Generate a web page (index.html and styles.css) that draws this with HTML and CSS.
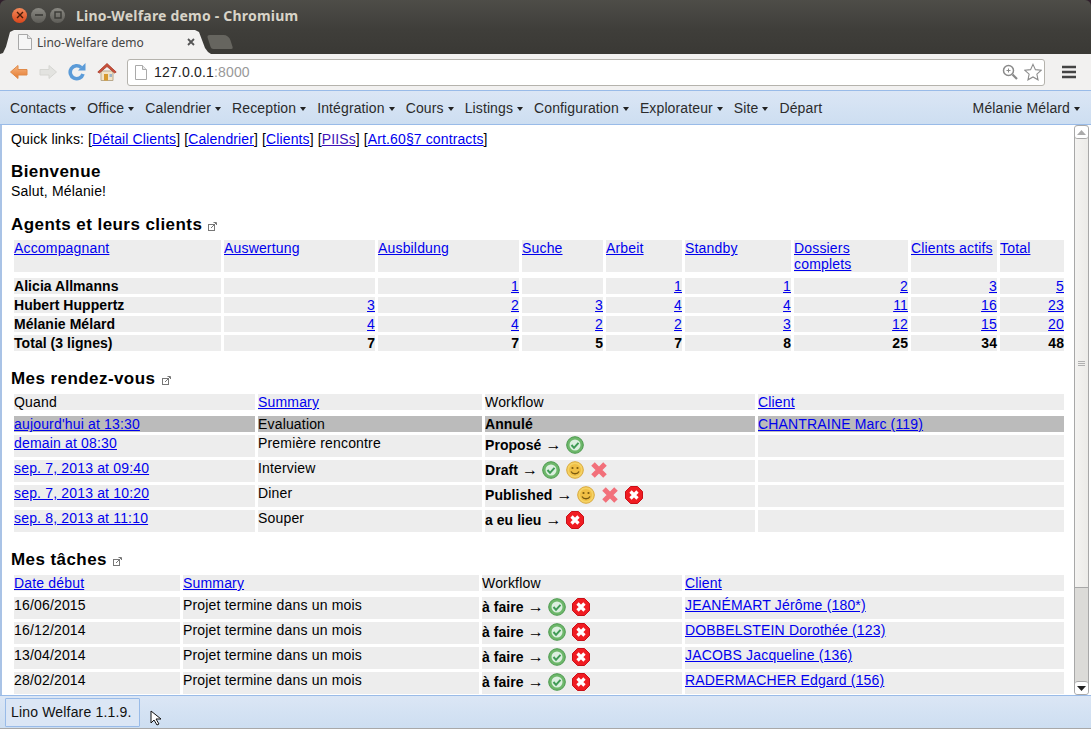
FILE: index.html
```html
<!DOCTYPE html>
<html lang="en">
<head>
    <meta charset="UTF-8">
    <title>Lino-Welfare demo - Chromium</title>
    <link rel="stylesheet" href="styles.css">
</head>
<body>
<div class="window">
    <div class="titlebar">
        <span class="win-btn win-close"><svg width="8" height="8" viewBox="0 0 8 8"><path d="M1 1l6 6M7 1l-6 6" stroke="#4a1c08" stroke-width="1.4"/></svg></span>
        <span class="win-btn"><svg width="8" height="8" viewBox="0 0 8 8"><path d="M0 4h8" stroke="#3a3a36" stroke-width="1.6"/></svg></span>
        <span class="win-btn"><svg width="8" height="8" viewBox="0 0 8 8"><rect x="1" y="1" width="6" height="6" fill="none" stroke="#3a3a36" stroke-width="1.4"/></svg></span>
        <span class="win-title">Lino-Welfare demo - Chromium</span>
    </div>
    <div class="tabstrip">
        <div class="tab">
            <svg width="14" height="16" viewBox="0 0 14 16"><path d="M.5.5h9l4 4v11H.5z" fill="#f6f6f6" stroke="#a8a8a8"/><path d="M9.5.5v4h4" fill="#e4e4e4" stroke="#a8a8a8"/></svg>
            <span class="tab-label">Lino-Welfare demo</span>
            <svg class="tab-x" width="8" height="8" viewBox="0 0 8 8"><path d="M1 1l6 6M7 1l-6 6" stroke="#555" stroke-width="1.8"/></svg>
        </div>
        <div class="newtab"></div>
    </div>
    <div class="toolbar">
        <svg class="tool" width="20" height="16" viewBox="0 0 20 16"><defs><linearGradient id="back" x1="0" y1="0" x2="0" y2="1"><stop offset="0" stop-color="#f6b580"/><stop offset="1" stop-color="#e47a30"/></linearGradient></defs><path d="M9 1.500L1.500 8 9 14.500V11h9V5.500H9z" fill="url(#back)" stroke="#e08a48" stroke-linejoin="round"/></svg>
        <svg class="tool" width="20" height="16" viewBox="0 0 20 16"><path d="M11 1.500L18.500 8 11 14.500V11H2V5.500h9z" fill="#e3e3e0" stroke="#d6d6d2" stroke-linejoin="round"/></svg>
        <svg class="tool tool-reload" width="18" height="18" viewBox="0 0 18 18"><path d="M15 11a6.500 6.500 0 1 1-1.800-6.500" fill="none" stroke="#5b9bd8" stroke-width="3.600"/><path d="M10 7.500h7.500V0z" fill="#5b9bd8"/></svg>
        <svg class="tool tool-home" width="20" height="20" viewBox="0 0 20 20"><path d="M4 9h12v9.500H4z" fill="#f1e3c8" stroke="#b9a98c"/><path d="M7 12h4v6.500H7z" fill="#d79a2e"/><path d="M12.500 12H15v3h-2.500z" fill="#9db4c8"/><path d="M.8 10L10 1.500 19.200 10l-1.600 1L10 4.500 2.400 11z" fill="#c9503a" stroke="#a83a28" stroke-width=".8"/></svg>
        <div class="omnibox">
            <svg width="12" height="15" viewBox="0 0 12 15"><path d="M.5.500h7l4 4v10H.5z" fill="#fff" stroke="#aaa"/><path d="M7.500.500v4h4" fill="#e8e8e8" stroke="#aaa"/></svg>
            <span class="url">127.0.0.1<span class="port">:8000</span></span>
            <svg class="zoom-icon" width="16" height="16" viewBox="0 0 16 16"><circle cx="6.500" cy="6.500" r="5" fill="#fff" stroke="#8a8a8a" stroke-width="1.500"/><path d="M10.500 10.500L15 15" stroke="#8a8a8a" stroke-width="2.200"/><path d="M6.500 4.500v4M4.500 6.500h4" stroke="#8a8a8a"/></svg>
            <svg width="18" height="18" viewBox="0 0 20 19"><path d="M10 1l2.700 5.900 6.300.7-4.700 4.300 1.300 6.300L10 15l-5.600 3.200 1.300-6.300L1 7.600l6.300-.7z" fill="#fff" stroke="#8c8c8c" stroke-width="1.200"/></svg>
        </div>
        <svg class="burger" width="14" height="14" viewBox="0 0 14 14"><path d="M0 2h14M0 7h14M0 12h14" stroke="#444" stroke-width="2.600"/></svg>
    </div>

    <nav class="menubar">
        <a class="menu-item caret">Contacts</a>
        <a class="menu-item caret">Office</a>
        <a class="menu-item caret">Calendrier</a>
        <a class="menu-item caret">Reception</a>
        <a class="menu-item caret">Intégration</a>
        <a class="menu-item caret">Cours</a>
        <a class="menu-item caret">Listings</a>
        <a class="menu-item caret">Configuration</a>
        <a class="menu-item caret">Explorateur</a>
        <a class="menu-item caret">Site</a>
        <a class="menu-item">Départ</a>
        <a class="menu-item caret menu-user">Mélanie Mélard</a>
    </nav>

    <div class="viewport">
        <main class="content">
            <p class="quick">Quick links: [<a href="#">Détail Clients</a>] [<a href="#">Calendrier</a>] [<a href="#">Clients</a>] [<a href="#" class="visited">PIISs</a>] [<a href="#">Art.60§7 contracts</a>]</p>

            <h1 class="welcome-title">Bienvenue</h1>
            <p class="welcome">Salut, Mélanie!</p>

            <h1 class="agents-title">Agents et leurs clients <svg class="popout" width="9" height="9" viewBox="0 0 9 9"><rect x=".5" y="2.500" width="6" height="6" fill="none" stroke="#777"/><path d="M3 6l5-5M5.500 .5H8.500V3" fill="none" stroke="#777"/></svg></h1>
            <table class="grid agents">
                <colgroup><col class="a1"><col class="a2"><col class="a3"><col class="a4"><col class="a5"><col class="a6"><col class="a7"><col class="a8"><col class="a9"></colgroup>
                <thead>
                    <tr><th><a href="#">Accompagnant</a></th><th><a href="#">Auswertung</a></th><th><a href="#">Ausbildung</a></th><th><a href="#">Suche</a></th><th><a href="#">Arbeit</a></th><th><a href="#">Standby</a></th><th><a href="#">Dossiers complets</a></th><th><a href="#">Clients actifs</a></th><th><a href="#">Total</a></th></tr>
                </thead>
                <tbody>
                    <tr><td><b>Alicia Allmanns</b></td><td></td><td class="num"><a href="#">1</a></td><td></td><td class="num"><a href="#">1</a></td><td class="num"><a href="#">1</a></td><td class="num"><a href="#">2</a></td><td class="num"><a href="#">3</a></td><td class="num"><a href="#">5</a></td></tr>
                    <tr><td><b>Hubert Huppertz</b></td><td class="num"><a href="#">3</a></td><td class="num"><a href="#">2</a></td><td class="num"><a href="#">3</a></td><td class="num"><a href="#">4</a></td><td class="num"><a href="#">4</a></td><td class="num"><a href="#">11</a></td><td class="num"><a href="#">16</a></td><td class="num"><a href="#">23</a></td></tr>
                    <tr><td><b>Mélanie Mélard</b></td><td class="num"><a href="#">4</a></td><td class="num"><a href="#">4</a></td><td class="num"><a href="#">2</a></td><td class="num"><a href="#">2</a></td><td class="num"><a href="#">3</a></td><td class="num"><a href="#">12</a></td><td class="num"><a href="#">15</a></td><td class="num"><a href="#">20</a></td></tr>
                    <tr class="total"><td>Total (3 lignes)</td><td class="num">7</td><td class="num">7</td><td class="num">5</td><td class="num">7</td><td class="num">8</td><td class="num">25</td><td class="num">34</td><td class="num">48</td></tr>
                </tbody>
            </table>

            <h1 class="rdv-title">Mes rendez-vous <svg class="popout" width="9" height="9" viewBox="0 0 9 9"><rect x=".5" y="2.500" width="6" height="6" fill="none" stroke="#777"/><path d="M3 6l5-5M5.500 .5H8.500V3" fill="none" stroke="#777"/></svg></h1>
            <table class="grid rdv">
                <colgroup><col class="r1"><col class="r2"><col class="r3"><col class="r4"></colgroup>
                <thead>
                    <tr><th>Quand</th><th><a href="#">Summary</a></th><th>Workflow</th><th><a href="#">Client</a></th></tr>
                </thead>
                <tbody>
                    <tr class="current"><td><a href="#">aujourd'hui at 13:30</a></td><td>Evaluation</td><td><b>Annulé</b></td><td><a href="#">CHANTRAINE Marc (119)</a></td></tr>
                    <tr class="tall"><td><a href="#">demain at 08:30</a></td><td>Première rencontre</td><td class="wf"><b>Proposé</b> <span class="arrow">→</span> <svg class="ic"><use href="#i-ok"/></svg></td><td></td></tr>
                    <tr class="tall"><td><a href="#">sep. 7, 2013 at 09:40</a></td><td>Interview</td><td class="wf"><b>Draft</b> <span class="arrow">→</span> <svg class="ic"><use href="#i-ok"/></svg> <svg class="ic"><use href="#i-smile"/></svg> <svg class="ic"><use href="#i-x"/></svg></td><td></td></tr>
                    <tr class="tall"><td><a href="#">sep. 7, 2013 at 10:20</a></td><td>Diner</td><td class="wf"><b>Published</b> <span class="arrow">→</span> <svg class="ic"><use href="#i-smile"/></svg> <svg class="ic"><use href="#i-x"/></svg> <svg class="ic"><use href="#i-stop"/></svg></td><td></td></tr>
                    <tr class="tall"><td><a href="#">sep. 8, 2013 at 11:10</a></td><td>Souper</td><td class="wf"><b>a eu lieu</b> <span class="arrow">→</span> <svg class="ic"><use href="#i-stop"/></svg></td><td></td></tr>
                </tbody>
            </table>

            <h1 class="tasks-title">Mes tâches <svg class="popout" width="9" height="9" viewBox="0 0 9 9"><rect x=".5" y="2.500" width="6" height="6" fill="none" stroke="#777"/><path d="M3 6l5-5M5.500 .5H8.500V3" fill="none" stroke="#777"/></svg></h1>
            <table class="grid tasks">
                <colgroup><col class="t1"><col class="t2"><col class="t3"><col class="t4"></colgroup>
                <thead>
                    <tr><th><a href="#">Date début</a></th><th><a href="#">Summary</a></th><th>Workflow</th><th><a href="#">Client</a></th></tr>
                </thead>
                <tbody>
                    <tr class="tall"><td>16/06/2015</td><td>Projet termine dans un mois</td><td class="wf"><b>à faire</b> <span class="arrow">→</span> <svg class="ic"><use href="#i-ok"/></svg> <svg class="ic"><use href="#i-stop"/></svg></td><td><a href="#">JEANÉMART Jérôme (180*)</a></td></tr>
                    <tr class="tall"><td>16/12/2014</td><td>Projet termine dans un mois</td><td class="wf"><b>à faire</b> <span class="arrow">→</span> <svg class="ic"><use href="#i-ok"/></svg> <svg class="ic"><use href="#i-stop"/></svg></td><td><a href="#">DOBBELSTEIN Dorothée (123)</a></td></tr>
                    <tr class="tall"><td>13/04/2014</td><td>Projet termine dans un mois</td><td class="wf"><b>à faire</b> <span class="arrow">→</span> <svg class="ic"><use href="#i-ok"/></svg> <svg class="ic"><use href="#i-stop"/></svg></td><td><a href="#">JACOBS Jacqueline (136)</a></td></tr>
                    <tr class="tall"><td>28/02/2014</td><td>Projet termine dans un mois</td><td class="wf"><b>à faire</b> <span class="arrow">→</span> <svg class="ic"><use href="#i-ok"/></svg> <svg class="ic"><use href="#i-stop"/></svg></td><td><a href="#">RADERMACHER Edgard (156)</a></td></tr>
                </tbody>
            </table>
        </main>
        <div class="scrollbar">
            <span class="sb-btn"><svg width="9" height="5" viewBox="0 0 9 5"><path d="M4.500 0L9 5H0z" fill="#aaa"/></svg></span>
            <span class="sb-thumb"><i></i><i></i><i></i></span>
            <span class="sb-track"></span>
            <span class="sb-btn"><svg width="9" height="5" viewBox="0 0 9 5"><path d="M4.500 5L9 0H0z" fill="#222"/></svg></span>
        </div>
    </div>

    <footer class="footer">
        <button class="version">Lino Welfare 1.1.9.</button>
        <svg class="cursor" width="14" height="16" viewBox="0 0 14 16"><path d="M1 1v12l3-3 3 5 2-1-3-5h5z" fill="#fff" stroke="#111"/></svg>
    </footer>
</div>

<svg class="defs" width="0" height="0">
    <symbol id="i-ok" viewBox="0 0 18 18"><circle cx="9" cy="9" r="8.300" fill="#6db76a" stroke="#4c9a4e"/><circle cx="9" cy="9" r="5.500" fill="#dcefe0"/><path d="M5.500 9l2.500 2.800 4.500-5" fill="none" stroke="#3f9a55" stroke-width="2"/></symbol>
    <symbol id="i-smile" viewBox="0 0 18 18"><circle cx="9" cy="9" r="8.300" fill="#f5d263" stroke="#d9a83a"/><circle cx="9" cy="9" r="6" fill="#f0bf45"/><circle cx="6.500" cy="7" r="1.100" fill="#7a5a10"/><circle cx="11.500" cy="7" r="1.100" fill="#7a5a10"/><path d="M5 10.500c1.500 3 6.500 3 8 0" fill="none" stroke="#7a5a10" stroke-width="1.300"/></symbol>
    <symbol id="i-x" viewBox="0 0 18 18"><path d="M3 3l12 12M15 3L3 15" stroke="#f2707a" stroke-width="5"/></symbol>
    <symbol id="i-stop" viewBox="0 0 18 18"><path d="M5.500.5h7l5 5v7l-5 5h-7l-5-5v-7z" fill="#f01c22" stroke="#c81018"/><path d="M5.500 5.500l7 7M12.500 5.500l-7 7" stroke="#fff" stroke-width="3.200"/></symbol>
</svg>
</body>
</html>
```

FILE: styles.css
```css
* {
    box-sizing: border-box;
}

html, body {
    margin: 0;
    height: 100%;
    overflow: hidden;
}

body {
    font-family: "Liberation Sans", Arial, sans-serif;
    font-size: 14px;
    color: #000;
    background: #fff;
}

.window {
    height: 729px;
    display: flex;
    flex-direction: column;
    background: #30202c;
}

/* browser chrome */
.titlebar {
    height: 30px;
    flex: none;
    display: flex;
    align-items: center;
    padding: 0 0 0 12px;
    gap: 4px;
    background: linear-gradient(#4e4d48, #3f3e3a);
    border-radius: 6px 6px 0 0;
}

.win-btn {
    width: 15px;
    height: 15px;
    border-radius: 50%;
    display: flex;
    align-items: center;
    justify-content: center;
    background: linear-gradient(#8a8983, #5e5d58);
}

.win-close {
    background: linear-gradient(#f48a5a, #d9471c);
}

.win-title {
    margin-left: 7px;
    font-family: "Noto Sans", "Open Sans", sans-serif;
    font-size: 14px;
    font-weight: 700;
    color: #d8d4c8;
    letter-spacing: .2px;
}

.tabstrip {
    height: 24px;
    flex: none;
    display: flex;
    align-items: flex-end;
    background: linear-gradient(#3f3e3a, #3a3935);
}

.tab {
    width: 211px;
    height: 24px;
    display: flex;
    align-items: center;
    padding: 0 0 0 18px;
    background: #f2f1f0;
    clip-path: polygon(0 100%, 3px 96%, 6px 70%, 10px 8%, 14px 0, 195px 0, 199px 8%, 205px 75%, 208px 92%, 211px 100%);
}

.tab-label {
    margin-left: 5px;
    font-family: "Noto Sans", sans-serif;
    font-size: 12px;
    color: #444;
    flex: 1;
}

.tab-x {
    margin-right: 16px;
}

.newtab {
    width: 22px;
    height: 14px;
    margin: 0 0 5px -2px;
    background: #66655f;
    border-radius: 3px 5px 2px 2px;
    transform: skewX(18deg);
}

.toolbar {
    height: 36px;
    flex: none;
    display: flex;
    align-items: center;
    padding-left: 9px;
    background: #f2f1f0;
}

.tool {
    margin-right: 9px;
    flex: none;
}

.tool-reload {
    margin-left: 1px;
}

.tool-home {
    margin-left: 2px;
}

.omnibox {
    width: 918px;
    height: 27px;
    margin-left: 1px;
    display: flex;
    align-items: center;
    padding: 0 2px 0 7px;
    background: #fff;
    border: 1px solid #b5b3ad;
    border-radius: 3px;
}

.url {
    margin-left: 7px;
    flex: 1;
    font-size: 14px;
    letter-spacing: .17px;
    color: #222;
}

.port {
    color: #999;
}

.zoom-icon {
    margin-right: 6px;
}

.burger {
    margin-left: 17px;
}

/* menu */
.menubar {
    height: 35px;
    flex: none;
    display: flex;
    align-items: center;
    padding: 0 11px 0 10px;
    gap: 11px;
    background: linear-gradient(#dbe6f5, #cddef1);
    border-top: 1px solid #99bbe8;
    border-bottom: 1px solid #99bbe8;
}

.menu-item {
    font-size: 14px;
    letter-spacing: .12px;
    color: #2b2b2b;
    text-decoration: none;
}

.caret::after {
    content: "";
    display: inline-block;
    margin-left: 4px;
    vertical-align: 2px;
    border-left: 3.500px solid transparent;
    border-right: 3.500px solid transparent;
    border-top: 4px solid #222;
}

.menu-user {
    margin-left: auto;
}

/* scrolling part */
.viewport {
    height: 570px;
    flex: none;
    display: flex;
    background: #fff;
    border-left: 2px solid #a9c3e6;
}

.content {
    flex: 1;
    min-width: 0;
    overflow: hidden;
    padding: 6px 0 0 9px;
    letter-spacing: .17px;
}

.quick {
    margin: 0;
    line-height: 16px;
    letter-spacing: .12px;
}

a {
    color: #0000ee;
    text-decoration: underline;
}

a.visited {
    color: #4014b8;
}

b, .grid .total td {
    letter-spacing: .05px;
}

h1 {
    margin: 0;
    font-size: 17px;
    line-height: 18px;
    font-weight: 700;
    letter-spacing: .43px;
}

.welcome-title {
    margin-top: 16px;
}

.welcome {
    margin: 2px 0 0;
    line-height: 16px;
}

.agents-title {
    margin-top: 17px;
}

.rdv-title {
    margin-top: 16px;
}

.tasks-title {
    margin-top: 16px;
}

.popout {
    margin-left: 1px;
    vertical-align: -1px;
}

.grid {
    table-layout: fixed;
    border-collapse: separate;
    border-spacing: 3px;
    width: 1056px;
    margin-top: 3px;
}

.grid th, .grid td {
    padding: 0;
    background: #ededed;
    font-weight: 400;
    text-align: left;
    vertical-align: top;
    line-height: 16px;
}

.grid thead::after {
    content: "";
    display: table-row;
}

.grid .num {
    text-align: right;
}

.grid .total td {
    font-weight: 700;
}

.grid .current td {
    background: #bbb;
}

.grid .tall td {
    height: 22px;
}

.grid .wf {
    line-height: 20px;
    white-space: nowrap;
}

.arrow {
    font-size: 16px;
    line-height: 14px;
}

.ic {
    width: 18px;
    height: 18px;
    margin-right: 2px;
    vertical-align: -4px;
}

.a1 { width: 207px; }
.a2 { width: 151px; }
.a3 { width: 141px; }
.a4 { width: 81px; }
.a5 { width: 76px; }
.a6 { width: 106px; }
.a7 { width: 114px; }
.a8 { width: 86px; }
.a9 { width: 64px; }

.r1 { width: 241px; }
.r2 { width: 224px; }
.r3 { width: 270px; }
.r4 { width: 306px; }

.t1 { width: 166px; }
.t2 { width: 296px; }
.t3 { width: 200px; }
.t4 { width: 379px; }

/* fake scrollbar */
.scrollbar {
    width: 15px;
    margin-right: 2px;
    flex: none;
    display: flex;
    flex-direction: column;
    background: #dcdbd8;
    border-left: 1px solid #a8a8a8;
    border-right: 1px solid #a8a8a8;
    border-radius: 4px;
}

.sb-btn {
    height: 14px;
    flex: none;
    display: flex;
    align-items: center;
    justify-content: center;
    background: #fff;
    border-radius: 3px;
    border-top: 1px solid #a8a8a8;
    border-bottom: 1px solid #a8a8a8;
}

.sb-thumb {
    height: 449px;
    flex: none;
    display: flex;
    flex-direction: column;
    align-items: center;
    justify-content: center;
    gap: 1px;
    background: linear-gradient(90deg, #f4f3f1, #ecebe8);
    border-bottom: 1px solid #a8a8a8;
}

.sb-thumb i {
    width: 7px;
    height: 1px;
    background: #b0b0b0;
}

.sb-track {
    flex: 1;
}

/* footer */
.footer {
    flex: 1;
    display: flex;
    align-items: center;
    padding: 0 0 0 5px;
    background: linear-gradient(#dbe6f5, #cddef1);
    border-top: 1px solid #99bbe8;
    border-bottom: 1px solid #a8a8a8;
}

.version {
    height: 29px;
    width: 135px;
    padding: 0 0 0 5px;
    font-family: inherit;
    font-size: 14px;
    letter-spacing: .17px;
    text-align: left;
    color: #111;
    background: #dbe6f5;
    border: 1px solid #99bbe8;
    border-radius: 1px;
}

.cursor {
    margin: 12px 0 0 10px;
}

.defs {
    position: absolute;
}
```
